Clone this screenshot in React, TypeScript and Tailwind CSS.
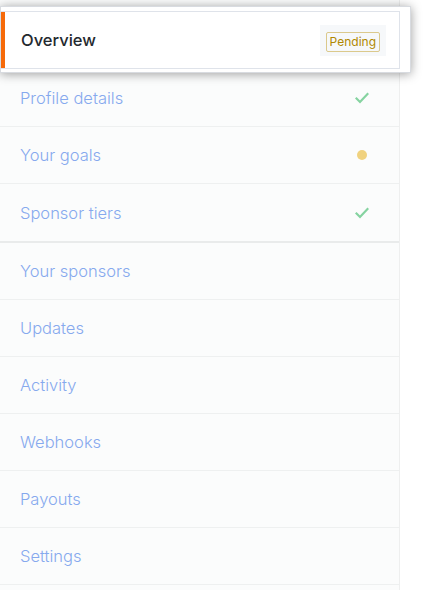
import React from "react";

const Check = () => (
  <svg width="14" height="12" viewBox="0 0 14 12" fill="none">
    <path d="M1.5 6.5 L5 10 L12.5 2" stroke="#85d3a0" strokeWidth="2.2" strokeLinecap="square" />
  </svg>
);

const Dot = () => <span className="block w-[10px] h-[10px] rounded-full bg-[#f0d27f]" />;

function Row({ label, right, thick }: { label: string; right?: React.ReactNode; thick?: boolean }) {
  return (
    <div
      className={`flex items-center justify-between pl-[20px] pr-[30px] ${
        thick ? "border-b-2 border-[#e9ebeb] h-[59px]" : "border-b border-[#eef0f0] h-[57px]"
      }`}
    >
      <span className="text-[16.5px] font-light text-[#86a9ee] pt-[1px]">{label}</span>
      {right}
    </div>
  );
}

export default function App() {
  return (
    <div
      className="w-[427px] h-[590px] bg-white overflow-hidden"
      style={{ fontFamily: "Inter, 'Noto Sans', sans-serif" }}
    >
      <div className="w-[400px] h-full bg-[#fbfcfc] border-r border-[#eeefef] pt-[6px]">
        <div className="relative z-10 w-[411px] bg-white border border-[#d8dbe0] pt-[4px] pb-[3px] mb-[-3px] shadow-[0_1px_10px_rgba(0,0,0,0.38)]">
          <div className="relative flex items-center justify-between w-[399px] h-[58px] border-y border-r border-[#dfe3ea] pl-[20px] pr-[13px]">
            <span className="absolute left-0 top-0 bottom-0 w-[4px] bg-[#f66a0a]" />
            <span className="text-[16.5px] font-medium text-[#24292e]">Overview</span>
            <span className="bg-[#f6f8fa] px-[6px] pt-[7px] pb-[4px]">
              <span className="block border border-[#dbc98c] rounded-[2px] px-[3px] h-[20px] leading-[18px] text-[12px] text-[#b08800]">
                Pending
              </span>
            </span>
          </div>
        </div>
        <Row label="Profile details" right={<Check />} />
        <Row label="Your goals" right={<span className="pr-[2px]"><Dot /></span>} />
        <Row label="Sponsor tiers" right={<Check />} thick />
        <Row label="Your sponsors" />
        <Row label="Updates" />
        <Row label="Activity" />
        <Row label="Webhooks" />
        <Row label="Payouts" />
        <Row label="Settings" />
      </div>
    </div>
  );
}
